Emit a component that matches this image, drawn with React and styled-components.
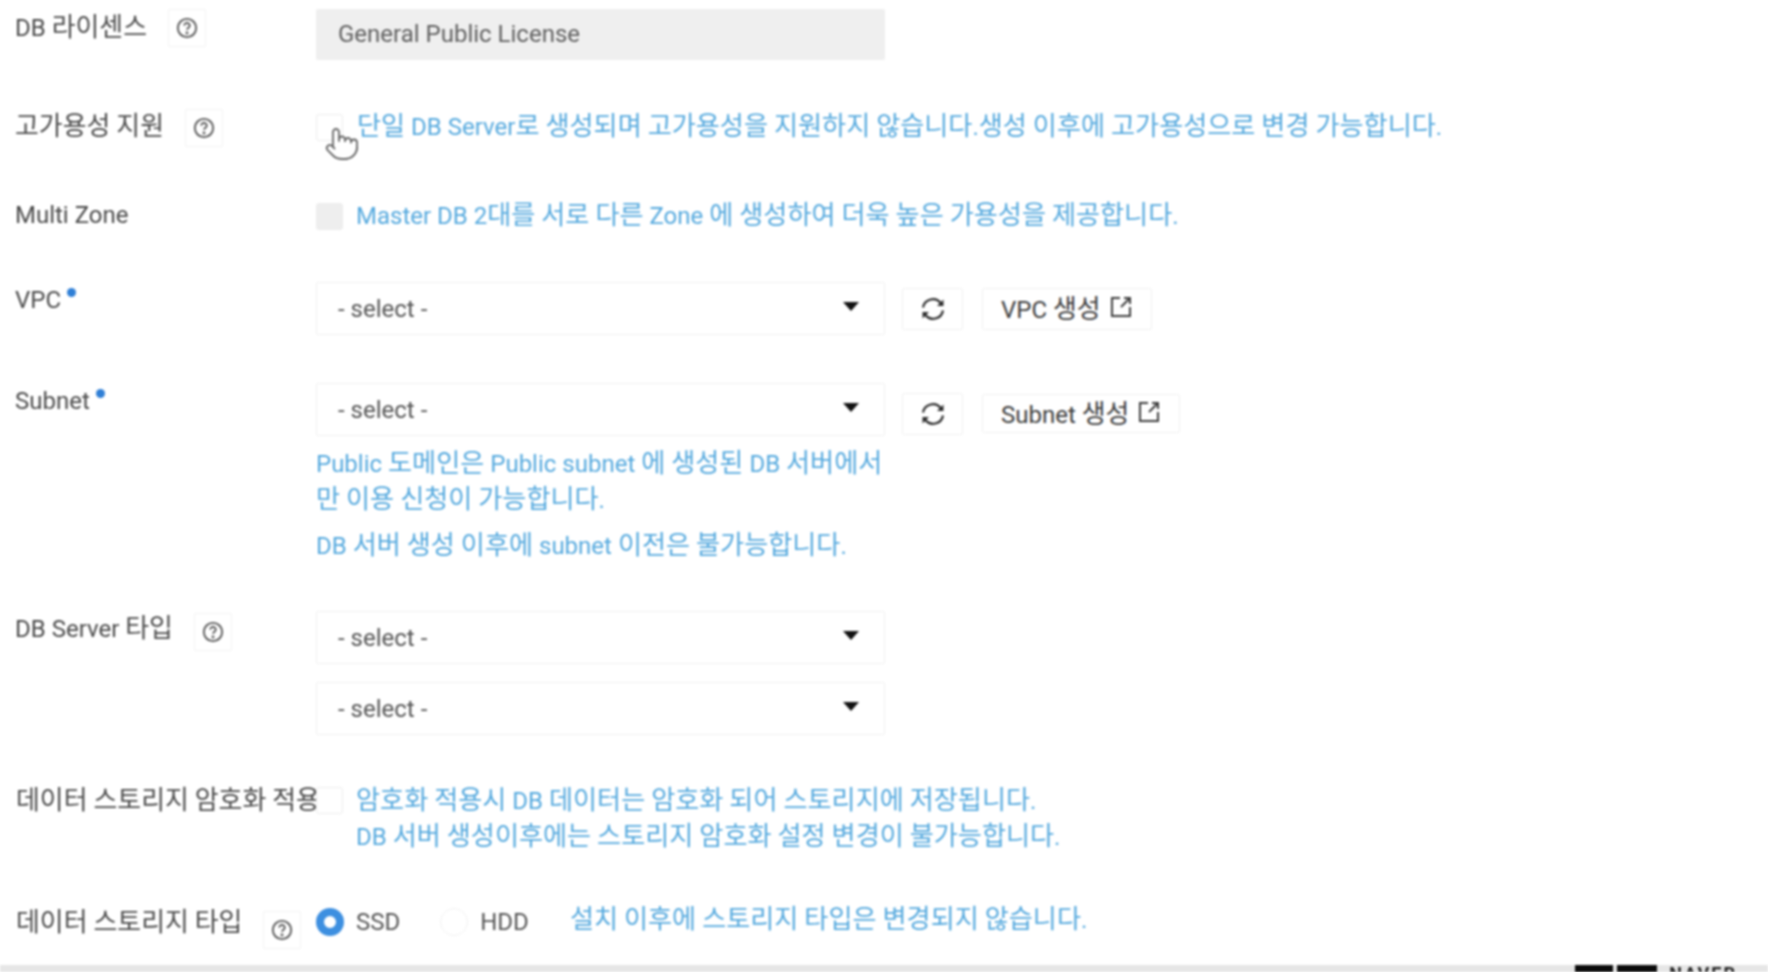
import styled, { createGlobalStyle } from "styled-components";
import { Pointer } from "lucide-react";

const GlobalStyle = createGlobalStyle`
  html, body {
    margin: 0;
    padding: 0;
    background: #fff;
  }
  body {
    font-family: Roboto, "Noto Sans CJK KR", sans-serif;
    overflow: hidden;
  }
`;

const Page = styled.div`
  height: 972px;
  display: flex;
  flex-direction: column;
  overflow: hidden;
  filter: blur(0.8px);
`;

const Form = styled.div`
  flex: 1;
  display: flex;
  flex-direction: column;
  padding: 9px 0 0 15px;
`;

const Row = styled.div`
  display: grid;
  grid-template-columns: 301px 1fr;
  margin-top: ${(p) => p.$gap || 0}px;
`;

const LabelCell = styled.div`
  display: flex;
  align-items: flex-start;
  height: 0;
  white-space: nowrap;
`;

// hangul in the capture runs larger than the latin next to it
const Hangul = styled.span`
  font-size: 1.08em;
`;

const Label = styled.span`
  font-size: 24px;
  line-height: 34px;
  color: #4a4a4a;
  margin-left: ${(p) => p.$indent || 0}px;
  margin-top: ${(p) => p.$top || 0}px;
`;

const Required = styled.i`
  display: inline-block;
  width: 9px;
  height: 9px;
  border-radius: 50%;
  background: #2f7fd6;
  vertical-align: 11px;
  margin-left: 6px;
`;

const HelpBox = styled.span`
  flex: none;
  width: 38px;
  height: 38px;
  border: 1px solid #f3f3f3;
  border-radius: 2px;
  display: flex;
  align-items: center;
  justify-content: center;
  box-sizing: border-box;
  margin-left: ${(p) => p.$left}px;
  margin-top: ${(p) => p.$top || 0}px;
  color: #555;
`;

const Field = styled.div`
  display: flex;
  flex-direction: column;
  min-width: 0;
`;

const Inline = styled.div`
  display: flex;
  align-items: ${(p) => p.$align || "center"};
  position: relative;
`;

const Disabled = styled.div`
  width: 569px;
  height: 51px;
  box-sizing: border-box;
  background: #efefef;
  border-radius: 2px;
  padding-left: 22px;
  font-size: 24px;
  line-height: 51px;
  color: #5f5f5f;
`;

const Check = styled.span`
  flex: none;
  width: 27px;
  height: 27px;
  box-sizing: border-box;
  border-radius: 3px;
  border: 1px solid #ececec;
  background: ${(p) => (p.$off ? "#eeeeee" : "#fff")};
`;

const Hint = styled.p`
  margin: ${(p) => p.$top || 0}px 0 0 ${(p) => p.$left || 0}px;
  font-size: 24px;
  line-height: 35px;
  color: #55a9de;
  white-space: nowrap;

  ${Hangul} {
    font-size: 1.09em;
  }
`;

const Select = styled.div`
  width: 569px;
  height: 53px;
  flex: none;
  box-sizing: border-box;
  border: 1px solid #f1f1f1;
  border-radius: 2px;
  padding-left: 21px;
  display: flex;
  align-items: center;
  justify-content: space-between;
  font-size: 24px;
  color: #555;
  margin-top: ${(p) => p.$top || 0}px;
`;

const Caret = styled.i`
  width: 0;
  height: 0;
  border-left: 8.5px solid transparent;
  border-right: 8.5px solid transparent;
  border-top: 9px solid #111;
  margin: -4px 25px 0 0;
`;

const ToolButton = styled.button`
  flex: none;
  height: ${(p) => p.$height || 42}px;
  box-sizing: border-box;
  margin: ${(p) => p.$top || 0}px 0 0 ${(p) => p.$left}px;
  padding: 0 ${(p) => (p.$square ? 0 : 18)}px ${(p) => (p.$square ? 0 : 4)}px;
  width: ${(p) => (p.$square ? "61px" : "auto")};
  display: flex;
  align-items: center;
  justify-content: center;
  gap: 8px;
  background: #fff;
  border: 1px solid #f1f1f1;
  border-radius: 2px;
  font-family: inherit;
  font-size: 24px;
  color: #3d3d3d;
`;

const Cursor = styled.span`
  position: absolute;
  left: 8px;
  top: 17px;
  color: #666;
  line-height: 0;
`;

const Radio = styled.span`
  flex: none;
  width: 28px;
  height: 28px;
  box-sizing: border-box;
  border-radius: 50%;
  border: ${(p) => (p.$on ? "8px solid #3d8fe0" : "1px solid #f1f1f1")};
  background: #fff;
`;

const RadioText = styled.span`
  font-size: 24px;
  color: #555;
  margin: 0 ${(p) => p.$right}px 0 12px;
`;

const Footer = styled.div`
  flex: none;
  height: 7px;
  background: #e6e6e6;
  display: flex;
  justify-content: flex-end;
  align-items: flex-start;
  gap: 4px;
  padding-right: 31px;
  overflow: hidden;
`;

const Badge = styled.span`
  width: ${(p) => p.$width}px;
  height: 7px;
  background: #0a0a0a;
`;

const Brand = styled.span`
  font-size: 18px;
  font-weight: 700;
  line-height: 18px;
  letter-spacing: 2px;
  color: #222;
  margin-left: 8px;
`;

function T({ children }) {
  return children.split(/([가-힣]+)/).map((part, i) =>
    i % 2 ? <Hangul key={i}>{part}</Hangul> : part
  );
}

function HelpIcon() {
  return (
    <svg width="22" height="22" viewBox="0 0 24 24" fill="none" stroke="currentColor" strokeWidth="2">
      <circle cx="12" cy="12" r="10" />
      <path d="M9 9.4a3 3 0 0 1 6 .2c0 2-3 2.3-3 4.4" />
      <circle cx="12" cy="17.4" r="0.6" fill="currentColor" />
    </svg>
  );
}

function SyncIcon() {
  return (
    <svg width="28" height="28" viewBox="0 0 28 28" fill="none" stroke="#2b2b2b" strokeWidth="2.2">
      <path d="M4 12.5A10 10 0 0 1 22 8.5" />
      <path d="M24 15.5A10 10 0 0 1 6 19.5" />
      <path d="M24.5 4.5v6.5h-6.5z" fill="#2b2b2b" stroke="none" />
      <path d="M3.5 23.5V17H10z" fill="#2b2b2b" stroke="none" />
    </svg>
  );
}

function OpenIcon() {
  return (
    <svg width="24" height="24" viewBox="0 0 24 24" fill="none" stroke="#3d3d3d" strokeWidth="2">
      <path d="M11 3H3v18h18v-9" />
      <path d="M12 12l9-9" />
      <path d="M15 3h6v6" />
    </svg>
  );
}

function Help({ left, top }) {
  return (
    <HelpBox $left={left} $top={top}>
      <HelpIcon />
    </HelpBox>
  );
}

function DropDown({ top }) {
  return (
    <Select $top={top}>
      - select -
      <Caret />
    </Select>
  );
}

export default function App() {
  return (
    <Page>
      <GlobalStyle />
      <Form>
        <Row>
          <LabelCell>
            <Label $top={1}><T>DB 라이센스</T></Label>
            <Help left={21} />
          </LabelCell>
          <Disabled>General Public License</Disabled>
        </Row>

        <Row $gap={49}>
          <LabelCell>
            <Label><T>고가용성 지원</T></Label>
            <Help left={21} />
          </LabelCell>
          <Inline>
            <Check />
            <Cursor>
              <Pointer size={36} strokeWidth={1.2} fill="#fff" />
            </Cursor>
            <Hint $left={14}><T>단일 DB Server로 생성되며 고가용성을 지원하지 않습니다.생성 이후에 고가용성으로 변경 가능합니다.</T></Hint>
          </Inline>
        </Row>

        <Row $gap={53}>
          <LabelCell>
            <Label><T>Multi Zone</T></Label>
          </LabelCell>
          <Inline>
            <Check $off />
            <Hint $left={13}><T>Master DB 2대를 서로 다른 Zone 에 생성하여 더욱 높은 가용성을 제공합니다.</T></Hint>
          </Inline>
        </Row>

        <Row $gap={48}>
          <LabelCell>
            <Label $top={1}>
              VPC
              <Required />
            </Label>
          </LabelCell>
          <Inline>
            <DropDown />
            <ToolButton $square $left={17}>
              <SyncIcon />
            </ToolButton>
            <ToolButton $left={19}>
              <span><T>VPC 생성</T></span>
              <OpenIcon />
            </ToolButton>
          </Inline>
        </Row>

        <Row $gap={48}>
          <LabelCell>
            <Label $top={1}>
              Subnet
              <Required />
            </Label>
          </LabelCell>
          <Field>
            <Inline $align="flex-start">
              <DropDown />
              <ToolButton $square $left={17} $top={10}>
                <SyncIcon />
              </ToolButton>
              <ToolButton $left={19} $top={11} $height={39}>
                <span><T>Subnet 생성</T></span>
                <OpenIcon />
              </ToolButton>
            </Inline>
            <Hint $top={10}>
              <T>Public 도메인은 Public subnet 에 생성된 DB 서버에서</T>
              <br />
              <T>만 이용 신청이 가능합니다.</T>
            </Hint>
            <Hint $top={10}><T>DB 서버 생성 이후에 subnet 이전은 불가능합니다.</T></Hint>
          </Field>
        </Row>

        <Row $gap={47}>
          <LabelCell>
            <Label><T>DB Server 타입</T></Label>
            <Help left={21} top={2} />
          </LabelCell>
          <Field>
            <DropDown />
            <DropDown top={18} />
          </Field>
        </Row>

        <Row $gap={52}>
          <LabelCell>
            <Label $indent={1} $top={-4}><T>데이터 스토리지 암호화 적용</T></Label>
          </LabelCell>
          <Field>
            <Inline $align="flex-start">
              <Check />
              <Hint $left={13} $top={-4}>
                <T>암호화 적용시 DB 데이터는 암호화 되어 스토리지에 저장됩니다.</T>
                <br />
                <T>DB 서버 생성이후에는 스토리지 암호화 설정 변경이 불가능합니다.</T>
              </Hint>
            </Inline>
          </Field>
        </Row>

        <Row $gap={50}>
          <LabelCell>
            <Label $indent={1}><T>데이터 스토리지 타입</T></Label>
            <Help left={21} top={6} />
          </LabelCell>
          <Inline>
            <Radio $on />
            <RadioText $right={40}>SSD</RadioText>
            <Radio />
            <RadioText $right={41}>HDD</RadioText>
            <Hint $top={-3}><T>설치 이후에 스토리지 타입은 변경되지 않습니다.</T></Hint>
          </Inline>
        </Row>
      </Form>
      <Footer>
        <Badge $width={38} />
        <Badge $width={40} />
        <Brand>NAVER</Brand>
      </Footer>
    </Page>
  );
}
